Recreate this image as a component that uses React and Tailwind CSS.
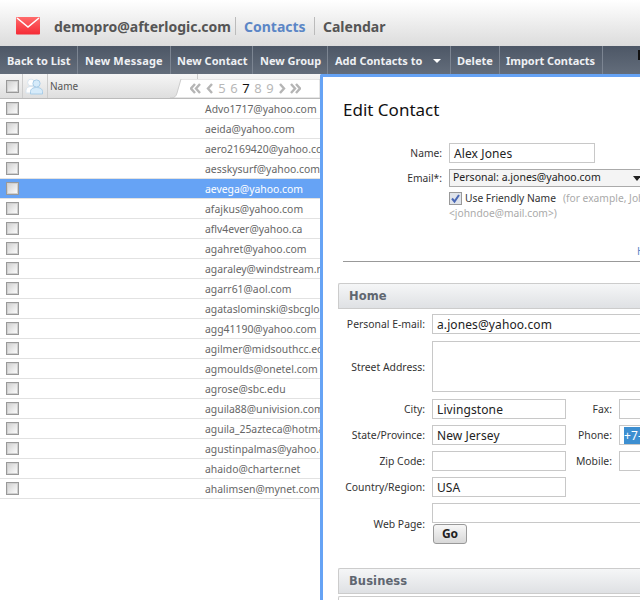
import React from "react";

const emails = ["Advo1717@yahoo.com","aeida@yahoo.com","aero2169420@yahoo.com","aesskysurf@yahoo.com","aevega@yahoo.com","afajkus@yahoo.com","aflv4ever@yahoo.ca","agahret@yahoo.com","agaraley@windstream.net","agarr61@aol.com","agataslominski@sbcglobal.net","agg41190@yahoo.com","agilmer@midsouthcc.edu","agmoulds@onetel.com","agrose@sbc.edu","aguila88@univision.com","aguila_25azteca@hotmail.com","agustinpalmas@yahoo.com","ahaido@charter.net","ahalimsen@mynet.com"];

const tools = [["Back to List","w-[78px] pl-[7px]"],["New Message","w-[93px] pl-[7px] tracking-[0.2px]"],["New Contact","w-[82px] pl-[6px]"],["New Group","w-[75px] pl-[7px]"],["Add Contacts to","w-[123px] pl-[7px]"],["Delete","w-[49px] pl-[6px]"],["Import Contacts","w-[103px] pl-[6px] tracking-[-0.05px]"]];

function Check() {
  return <span className="block w-[13px] h-[13px] shrink-0 border border-[#999] bg-linear-to-br from-[#cfcfcf] to-white shadow-[inset_0_0_0_1px_#d0d0d0]" />;
}

function Chevron({ dir, double }) {
  return (
    <svg width={double ? 12 : 8} height="11" viewBox={double ? "0 0 12 11" : "0 0 8 11"} fill="none" stroke="#b5b5b5" strokeWidth="2.4" className={dir === "r" ? "shrink-0" : "shrink-0 -scale-x-100"}>
      <path d="M2 1l4 4.500L2 10" />
      {double && <path d="M7 1l4 4.500L7 10" />}
    </svg>
  );
}

function Field({ w, children }) {
  return <div className={`${w} h-5 shrink-0 border border-[#c8c8c8] bg-white pl-1 text-[12px] leading-[20px] text-[#222] tracking-[0.1px] overflow-hidden whitespace-nowrap`}>{children}</div>;
}

function Label({ w = "w-[87px]", children }) {
  return <div className={`${w} shrink-0 pt-[2px] text-right text-[10.400px] text-[#333] whitespace-nowrap`}>{children}</div>;
}

function Row({ label, value, side, sideValue, w = "w-[134px]", mt = "mt-[6px]" }) {
  return (
    <div className={`flex items-center ${mt}`}>
      <Label>{label}</Label>
      <div className="w-[7px] shrink-0" />
      <Field w={w}>{value}</Field>
      {side && <>
        <Label w="w-[46px]">{side}</Label>
        <div className="w-[7px] shrink-0" />
        <Field w="w-[100px]">{sideValue}</Field>
      </>}
    </div>
  );
}

function Section({ children, className = "" }) {
  return <div className={`h-[26px] w-[320px] ml-[15px] flex items-center pl-[10px] pt-[2px] rounded-tl-[2px] border border-[#ccc] border-r-0 bg-linear-to-b from-[#f5f6f7] to-[#dfe1e4] text-[11.500px] font-bold text-[#5f6670] tracking-[0.1px] font-['DejaVu_Sans',sans-serif] ${className}`}>{children}</div>;
}

export default function App() {
  return (
    <div className="relative w-[640px] h-[600px] overflow-hidden bg-white font-['Noto_Sans',sans-serif]">
      <header className="h-[46px] flex items-center bg-linear-to-b from-white to-[#dcdcdc] pl-4 pt-[6px]">
        <svg width="24" height="18" viewBox="0 0 24 18" className="shrink-0">
          <defs><linearGradient id="m" x1="0" y1="0" x2="0" y2="1"><stop offset="0" stopColor="#ff6b6b"/><stop offset="1" stopColor="#f52a35"/></linearGradient></defs>
          <rect width="24" height="17.500" rx="1" fill="url(#m)"/>
          <path d="M1 1l11 9 11-9" fill="none" stroke="#fff" strokeWidth="1.600"/>
        </svg>
        <span className="ml-[14px] w-[181px] text-[14px] font-bold text-[#555] whitespace-nowrap">demopro@afterlogic.com</span>
        <span className="h-[18px] w-px bg-[#bbb]" />
        <span className="ml-2 w-[70px] text-[14px] font-bold text-[#5b86c6]">Contacts</span>
        <span className="h-[18px] w-px bg-[#bbb]" />
        <span className="ml-2 text-[14px] font-bold text-[#555]">Calendar</span>
      </header>

      <nav className="h-[28px] flex bg-linear-to-b from-[#4d5766] to-[#636d7b]">
        {tools.map(([t, w]) => (
          <div key={t} className={`${w} h-full shrink-0 flex items-center pt-[2px] border-r border-[#7c8592] text-[11px] font-bold text-[#eef0f3] whitespace-nowrap`}>
            {t}
            {t === "Add Contacts to" && <span className="ml-[11px] w-0 h-0 border-x-[4px] border-x-transparent border-t-[4px] border-t-white" />}
          </div>
        ))}
        <div className="ml-auto mt-1 w-[2px] h-[10px] bg-[#111]" />
      </nav>

      <div className="w-[320px]">
        <div className="relative h-[25px] flex items-center border-b border-[#bbb] bg-linear-to-b from-[#f6f6f6] to-[#dedede]">
          <div className="w-[23px] h-full flex items-center pl-[6px] border-r border-[#ccc]"><Check /></div>
          <div className="w-[25px] h-full flex items-center pl-[2px] border-r border-[#ccc]">
            <svg width="18" height="18" viewBox="0 0 18 18">
              <circle cx="6" cy="5.500" r="3.400" fill="#fff" stroke="#d8e4ee"/>
              <path d="M1 16v-2.500c0-2.500 2-4 5-4s5 1.500 5 4V16z" fill="#fff" stroke="#d8e4ee"/>
              <circle cx="11.500" cy="6.500" r="3.600" fill="#d6ebfa" stroke="#a9cde8"/>
              <path d="M5.500 17v-2.500c0-2.500 2.500-4 6-4s6 1.500 6 4V17z" fill="#d6ebfa" stroke="#a9cde8"/>
            </svg>
          </div>
          <span className="pl-[2px] pt-[1px] text-[10px] text-[#555]">Name</span>
          <div className="absolute right-0 top-0 h-[6px] w-[123px] border-l border-[#ccc]" />
          <div className="absolute left-[170px] bottom-0 w-[150px] h-[19px] flex items-center pl-[20px]">
            <svg className="absolute inset-0" width="150" height="19" viewBox="0 0 150 19"><path d="M0 19c5 0 6-2 7-5l4-14h139v19z" fill="#fff" stroke="#ccc"/></svg>
            <div className="relative flex items-center text-[13px] leading-none text-[#b8b8b8]">
              <Chevron double />
              <span className="ml-[4px]"><Chevron /></span>
              <span className="ml-[2px] w-3 text-center">5</span>
              <span className="w-3 text-center">6</span>
              <span className="w-3 text-center text-[#111]">7</span>
              <span className="w-3 text-center">8</span>
              <span className="w-3 text-center">9</span>
              <span className="ml-[2px]"><Chevron dir="r" /></span>
              <span className="ml-[3px]"><Chevron dir="r" double /></span>
            </div>
          </div>
        </div>

        {emails.map((e, i) => (
          <div key={e} className={`h-5 flex items-center pl-[6px] border-b border-[#e2e2e2] ${i === 4 ? "bg-[#66a3f5] text-white" : "text-[#666]"}`}>
            <Check />
            <span className="ml-[186px] pt-[2px] text-[10.400px] whitespace-nowrap">{e}</span>
          </div>
        ))}
      </div>

      <aside className="absolute left-[320px] top-[74px] w-[340px] h-[540px] border-l-[3px] border-t-[3px] border-[#66a3f5] rounded-tl-[2px] bg-white overflow-hidden">
        <h1 className="ml-5 mt-[19px] text-[17px] leading-[28px] text-[#111]">Edit Contact</h1>

        <div className="mt-[19px] flex items-center">
          <div className="w-[119px] shrink-0 pt-[2px] text-right text-[10.25px] text-[#333]">Name:</div>
          <div className="w-[7px] shrink-0" />
          <Field w="w-[146px]">Alex Jones</Field>
        </div>
        <div className="mt-[6px] flex items-center">
          <div className="w-[119px] shrink-0 pt-[2px] text-right text-[10.25px] text-[#333]">Email*:</div>
          <div className="w-[7px] shrink-0" />
          <div className="w-[196px] h-[18px] shrink-0 flex items-center justify-between pl-[3px] pr-[3px] border border-[#aaa] bg-[#f4f4f4] text-[10.500px] text-[#222]">
            Personal: a.jones@yahoo.com
            <span className="w-0 h-0 border-x-[4px] border-x-transparent border-t-[5px] border-t-[#222]" />
          </div>
        </div>
        <div className="ml-[126px] mt-[5px] w-[260px] flex items-center text-[10.25px] leading-[13px] whitespace-nowrap">
          <svg width="13" height="13" viewBox="0 0 13 13" className="shrink-0">
            <rect x="0.500" y="0.500" width="12" height="12" fill="#dfe3ea" stroke="#999"/>
            <path d="M3 6.500l2.500 3L10 3" fill="none" stroke="#4a68b5" strokeWidth="2"/>
          </svg>
          <span className="ml-[3px] text-[#333]">Use Friendly Name</span>
          <span className="ml-[7px] text-[#aaa]">(for example, John Doe</span>
        </div>
        <div className="ml-[126px] text-[10.25px] leading-[14px] mt-[1px] text-[#aaa]">&lt;johndoe@mail.com&gt;)</div>
        <div className="relative h-[41px]">
          <span className="absolute left-[314px] top-[24px] text-[10.25px] leading-[14px] text-[#5b86c6]">Hide</span>
        </div>
        <div className="ml-5 h-px bg-[#999]" />

        <Section className="mt-[21px]">Home</Section>
        <div className="ml-[15px]">
          <Row label="Personal E-mail:" value="a.jones@yahoo.com" w="w-[260px]" mt="mt-[5px]" />
          <div className="mt-[7px] flex items-center">
            <Label>Street Address:</Label>
            <div className="w-[7px] shrink-0" />
            <div className="w-[260px] h-[51px] shrink-0 border border-[#c8c8c8]" />
          </div>
          <Row label="City:" value="Livingstone" side="Fax:" mt="mt-[7px]" />
          <Row label="State/Province:" value="New Jersey" side="Phone:" sideValue={<span className="bg-[#3d8fd1] text-white">+7-495-123</span>} />
          <Row label="Zip Code:" side="Mobile:" />
          <Row label="Country/Region:" value="USA" />
          <div className="mt-[6px] flex items-center">
            <Label>Web Page:</Label>
            <div className="w-[7px] shrink-0" />
            <div>
              <Field w="w-[260px]" />
              <div className="ml-px mt-[1px] w-[34px] h-5 flex items-center justify-center rounded-[3px] border border-[#999] bg-linear-to-b from-[#f7f7f7] to-[#d8d8d8] text-[12px] font-bold text-[#222]">Go</div>
            </div>
          </div>
        </div>
        <Section className="mt-[24px]">Business</Section>
        <div className="ml-[15px] mt-[2px] h-[6px] border-t border-l border-[#ccc] rounded-tl-[2px]" />
      </aside>
    </div>
  );
}
